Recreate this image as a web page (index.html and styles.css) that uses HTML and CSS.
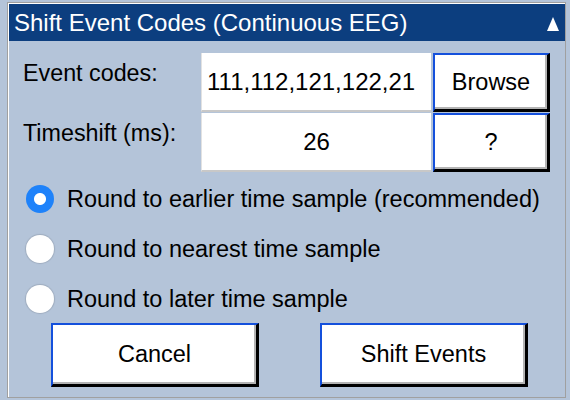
FILE: index.html
```html
<!DOCTYPE html>
<html lang="en">
<head>
    <meta charset="UTF-8">
    <title>Shift Event Codes</title>
    <link rel="stylesheet" href="styles.css">
</head>
<body>
    <div class="panel">
        <div class="title-bar">
            <span>Shift Event Codes (Continuous EEG)</span>
            <svg class="arrow" width="12" height="14" viewBox="0 0 12 14"><polygon points="6,0 12,14 0,14" fill="#fff"/></svg>
        </div>

        <div class="fields">
            <div class="label">Event codes:</div>
            <div class="field left">111,112,121,122,21</div>
            <div class="button">Browse</div>

            <div class="label">Timeshift (ms):</div>
            <div class="field">26</div>
            <div class="button">?</div>
        </div>

        <div class="options">
            <div class="option"><span class="radio checked"></span>Round to earlier time sample (recommended)</div>
            <div class="option"><span class="radio"></span>Round to nearest time sample</div>
            <div class="option"><span class="radio"></span>Round to later time sample</div>
        </div>

        <div class="actions">
            <div class="button big">Cancel</div>
            <div class="button big">Shift Events</div>
        </div>
    </div>
</body>
</html>
```

FILE: styles.css
```css
body {
    margin: 2px 0 0 7px;
    background-color: #b4c4d9;
    font-family: "Liberation Sans", Arial, sans-serif;
    color: #000;
}
.panel {
    width: 556px;
    height: 393px;
    border: 1px solid #a0a0a0;
    box-shadow: inset 1px 1px 0 #ffffff;
    padding: 1px 0 0 1px;
    box-sizing: content-box;
    background-color: #b4c4d9;
}
.title-bar {
    display: flex;
    justify-content: space-between;
    align-items: center;
    height: 37px;
    padding: 0 6px 0 5px;
    background-color: #0c3e7f;
    color: #fff;
    font-size: 24px;
}
.arrow {
    margin-top: 2px;
}
.fields {
    display: grid;
    grid-template-columns: 176px 230px 117px;
    grid-auto-rows: 59px;
    column-gap: 2px;
    row-gap: 1px;
    margin: 12px 0 0 14px;
}
.label {
    font-size: 23.3px;
    padding-top: 7px;
}
.field {
    background-color: #fff;
    border-bottom: 2px solid #c8c8c8;
    border-left: 1px solid #e2e2e2;
    font-size: 24px;
    display: flex;
    align-items: center;
    justify-content: center;
    white-space: nowrap;
    overflow: hidden;
}
.field.left {
    justify-content: flex-start;
    padding-left: 5px;
}
.button {
    background-color: #fff;
    border-left: 2px solid #1450dc;
    border-top: 2px solid #1450dc;
    border-right: 3px solid #000;
    border-bottom: 3px solid #000;
    box-shadow: inset -2px -2px 0 #b4b4b4;
    font-size: 23.5px;
    display: flex;
    align-items: center;
    justify-content: center;
}
.options {
    display: flex;
    flex-direction: column;
    gap: 22px;
    margin: 13px 0 0 17px;
}
.option {
    display: flex;
    align-items: center;
    height: 28px;
    font-size: 23.5px;
}
.radio {
    width: 28px;
    height: 28px;
    border-radius: 50%;
    background-color: #fff;
    box-shadow: 0 0 1px 1px rgba(0, 0, 0, 0.12);
    margin-right: 13px;
    flex-shrink: 0;
}
.radio.checked {
    background-color: #1e82fa;
    background-image: radial-gradient(circle, #fff 0, #fff 5.5px, #1e82fa 6.5px);
    box-shadow: none;
}
.actions {
    display: flex;
    gap: 61px;
    margin: 10px 0 0 42px;
}
.button.big {
    width: 203px;
    height: 59px;
}
```
